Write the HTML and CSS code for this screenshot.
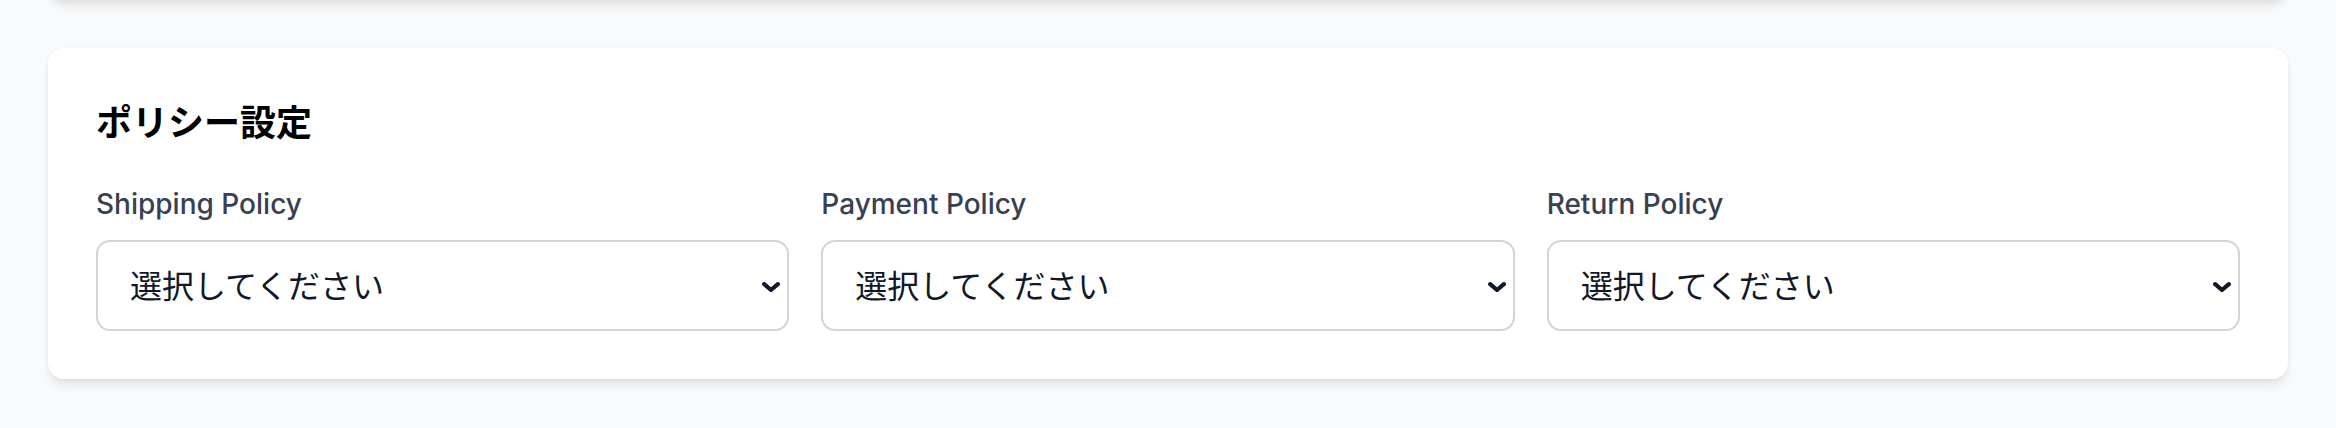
FILE: index.html
```html
<!DOCTYPE html>
<html lang="ja">
<head>
<meta charset="utf-8">
<title>ポリシー設定</title>
<link rel="stylesheet" href="styles.css">
</head>
<body>
<div class="page">
  <div class="prev-card"></div>
  <section class="card">
    <h2 class="card-title">ポリシー設定</h2>
    <div class="grid">
      <div class="field">
        <label class="field-label" for="ship">Shipping Policy</label>
        <div class="select-wrap">
          <select class="select" id="ship"><option>選択してください</option></select>
          <svg class="chevron" viewBox="0 0 18 10" aria-hidden="true"><polyline points="2.2,2.2 9,8 15.8,2.2" fill="none" stroke="#111827" stroke-width="4.2" stroke-linecap="round" stroke-linejoin="round"/></svg>
        </div>
      </div>
      <div class="field">
        <label class="field-label" for="pay">Payment Policy</label>
        <div class="select-wrap">
          <select class="select" id="pay"><option>選択してください</option></select>
          <svg class="chevron" viewBox="0 0 18 10" aria-hidden="true"><polyline points="2.2,2.2 9,8 15.8,2.2" fill="none" stroke="#111827" stroke-width="4.2" stroke-linecap="round" stroke-linejoin="round"/></svg>
        </div>
      </div>
      <div class="field">
        <label class="field-label" for="ret">Return Policy</label>
        <div class="select-wrap">
          <select class="select" id="ret"><option>選択してください</option></select>
          <svg class="chevron" viewBox="0 0 18 10" aria-hidden="true"><polyline points="2.2,2.2 9,8 15.8,2.2" fill="none" stroke="#111827" stroke-width="4.2" stroke-linecap="round" stroke-linejoin="round"/></svg>
        </div>
      </div>
    </div>
  </section>
</div>
</body>
</html>
```

FILE: styles.css
```css
html, body {
  margin: 0;
  background: #f9fafb;
}

body {
  font-family: Inter, "Noto Sans CJK JP", sans-serif;
  color: #111827;
}

.page {
  display: flow-root;
  padding: 0 48px 48px;
}

.prev-card {
  height: 40px;
  margin-top: -40px;
  margin-bottom: 48px;
  background: #ffffff;
  border-radius: 0 0 16px 16px;
  box-shadow: 0 8px 12px -2px rgba(0, 0, 0, 0.08), 0 4px 8px -4px rgba(0, 0, 0, 0.08);
}

.card {
  background: #ffffff;
  border-radius: 16px;
  padding: 48px;
  box-shadow: 0 8px 12px -2px rgba(0, 0, 0, 0.08), 0 4px 8px -4px rgba(0, 0, 0, 0.08), 0 0 4px rgba(0, 0, 0, 0.03);
}

.card-title {
  margin: 0 0 40px;
  font-family: "Noto Sans CJK JP", sans-serif;
  font-size: 36px;
  line-height: 48px;
  font-weight: 700;
  color: #000000;
}

.grid {
  display: grid;
  grid-template-columns: repeat(3, 1fr);
  gap: 32px;
}

.field-label {
  display: block;
  margin-bottom: 16px;
  font-family: Inter, sans-serif;
  font-size: 28px;
  line-height: 40px;
  font-weight: 500;
  color: #374151;
}

.select-wrap {
  position: relative;
}

.select {
  appearance: none;
  -webkit-appearance: none;
  display: block;
  width: 100%;
  height: 91px;
  box-sizing: border-box;
  margin: 0;
  padding: 0 60px 3px 32px;
  border: 2px solid #d1d5db;
  border-radius: 14px;
  background: #ffffff;
  font-family: "Noto Sans CJK JP", sans-serif;
  font-size: 32px;
  color: #111827;
  outline: none;
}

.chevron {
  position: absolute;
  right: 9px;
  top: calc(50% - 4px);
  width: 18px;
  height: 10px;
  pointer-events: none;
}
```
